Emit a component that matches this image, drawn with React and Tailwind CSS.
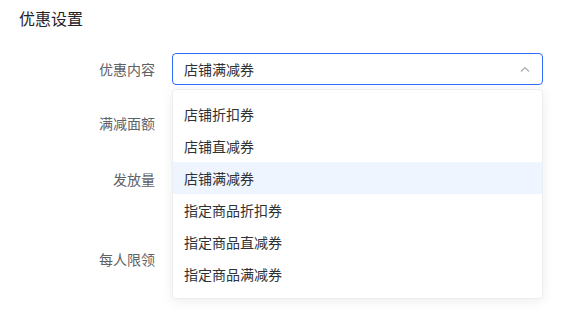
import React from 'react';

const options = ['店铺折扣券', '店铺直减券', '店铺满减券', '指定商品折扣券', '指定商品直减券', '指定商品满减券'];

export default function App() {
  const selected = '店铺满减券';

  return (
    <div className="w-[568px] h-[320px] bg-white overflow-hidden font-['Noto_Sans_CJK_SC','Noto_Sans',sans-serif]">
      {/* Section title */}
      <h2 className="pl-[19px] pt-[7px] text-[16px] leading-[22px] text-[#1f2329]">优惠设置</h2>

      <div className="relative mt-[24px]">
        {/* Form rows */}
        <div className="flex flex-col">
          <div className="flex items-center h-[32px]">
            <label className="w-[155px] text-right text-[14px] text-[#606266]">优惠内容</label>
            <div className="ml-[17px] w-[371px] h-[32px] border border-[#2f6bff] rounded-[4px] flex items-center justify-between pl-[11px] pr-[12px]">
              <span className="text-[14px] text-[#303133]">{selected}</span>
              <svg width="10" height="6" viewBox="0 0 10 6" fill="none" stroke="#a8abb2" strokeWidth="1.2">
                <path d="M1 5.5 L5 1.5 L9 5.5" />
              </svg>
            </div>
          </div>
          <div className="flex items-center h-[32px] mt-[22px]">
            <label className="w-[155px] text-right text-[14px] text-[#606266]">满减面额</label>
          </div>
          <div className="flex items-center h-[32px] mt-[24px]">
            <label className="w-[155px] text-right text-[14px] text-[#606266]">发放量</label>
          </div>
          <div className="flex items-center h-[32px] mt-[48px]">
            <label className="w-[155px] text-right text-[14px] text-[#606266]">每人限领</label>
          </div>
        </div>

        {/* Dropdown menu */}
        <div className="absolute left-[172px] top-[36px] w-[371px] py-[8px] bg-white border border-[#edeef2] rounded-[4px] shadow-[0_2px_12px_rgba(0,0,0,0.08)]">
          {options.map((o) => (
            <div
              key={o}
              className={`h-[32px] flex items-center pl-[11px] text-[14px] text-[#303133] ${o === selected ? 'bg-[#eef5ff]' : ''}`}
            >
              {o}
            </div>
          ))}
        </div>
      </div>
    </div>
  );
}
